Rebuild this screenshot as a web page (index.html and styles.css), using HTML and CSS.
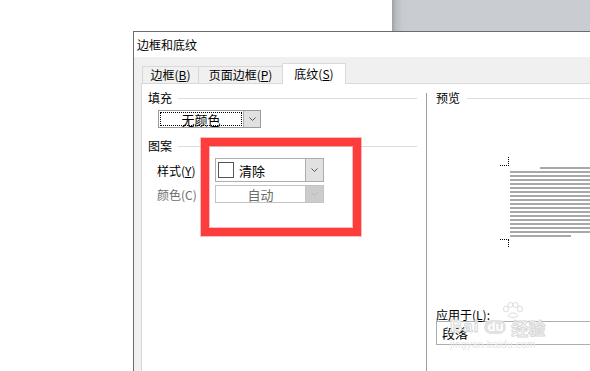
FILE: index.html
```html
<!DOCTYPE html>
<html lang="zh-CN">
<head>
<meta charset="UTF-8" />
<meta name="viewport" content="width=device-width, initial-scale=1" />
<title>边框和底纹</title>
<link rel="stylesheet" href="styles.css">
</head>
<body>

<div class="top">
  <div class="blank"></div>
  <div class="desk"></div>
</div>

<div class="dialog">
  <div class="titlebar">边框和底纹</div>
  <div class="body">
    <div class="tabs">
      <div class="tab t1">边框(<u>B</u>)</div>
      <div class="tab t2">页面边框(<u>P</u>)</div>
      <div class="tab t3 active">底纹(<u>S</u>)</div>
    </div>

    <div class="panel">
      <div class="left">
        <div class="legend"><span>填充</span><i></i></div>
        <div class="combo fill">
          <div class="val"><span class="focus">无颜色</span></div>
          <div class="arrow"><svg width="7" height="4" viewBox="0 0 7 4"><path d="M0.5 0.5L3.5 3.5L6.5 0.5" fill="none" stroke="#555" /></svg></div>
        </div>

        <div class="legend pattern"><span>图案</span><i></i></div>
        <div class="field style-row">
          <label>样式(<u>Y</u>)</label>
          <div class="combo style">
            <div class="val"><span class="swatch"></span><span class="name">清除</span></div>
            <div class="arrow"><svg width="7" height="4" viewBox="0 0 7 4"><path d="M0.5 0.5L3.5 3.5L6.5 0.5" fill="none" stroke="#555" /></svg></div>
          </div>
        </div>
        <div class="field color-row disabled">
          <label>颜色(C)</label>
          <div class="combo color">
            <div class="val center">自动</div>
            <div class="arrow"><svg width="7" height="4" viewBox="0 0 7 4"><path d="M0.5 0.5L3.5 3.5L6.5 0.5" fill="none" stroke="#b8b8b8" /></svg></div>
          </div>
        </div>
      </div>

      <div class="sep"></div>

      <div class="right">
        <div class="legend"><span>预览</span><i></i></div>
        <svg class="preview" width="90" height="93" viewBox="0 0 90 93">
          <path d="M0 9.5H9M8.5 1V9" fill="none" stroke="#000" stroke-dasharray="1 1" />
          <path d="M0 83.5H9M8.5 84V92" fill="none" stroke="#000" stroke-dasharray="1 1" />
          <g fill="#a8a8a8">
            <rect x="40" y="11" width="50" height="2" />
            <rect x="10" y="15" width="80" height="2" />
            <rect x="10" y="19" width="80" height="2" />
            <rect x="10" y="23" width="80" height="2" />
            <rect x="10" y="27" width="80" height="2" />
            <rect x="10" y="31" width="80" height="2" />
            <rect x="10" y="35" width="80" height="2" />
            <rect x="10" y="39" width="80" height="2" />
            <rect x="10" y="43" width="80" height="2" />
            <rect x="10" y="47" width="80" height="2" />
            <rect x="10" y="51" width="80" height="2" />
            <rect x="10" y="55" width="80" height="2" />
            <rect x="10" y="59" width="80" height="2" />
            <rect x="10" y="63" width="80" height="2" />
            <rect x="10" y="67" width="80" height="2" />
            <rect x="10" y="71" width="80" height="2" />
            <rect x="10" y="75" width="80" height="2" />
            <rect x="10" y="79" width="61" height="2" />
          </g>
        </svg>
        <div class="apply-label">应用于(<u>L</u>):</div>
        <div class="apply-box">段落</div>
      </div>
    </div>
  </div>
</div>

<div class="mark"></div>

<div class="watermark">
  <svg class="paw" width="22" height="16" viewBox="0 0 22 16">
    <g fill="none" stroke="#dcdcdc">
      <ellipse cx="4" cy="7" rx="2.5" ry="3" />
      <ellipse cx="8.5" cy="3" rx="2.5" ry="2.5" />
      <ellipse cx="13.5" cy="3" rx="2.5" ry="2.5" />
      <ellipse cx="18" cy="7" rx="2.5" ry="3" />
      <path d="M6 14c1-4 9-4 10 0c-2 2-8 2-10 0z" />
    </g>
  </svg>
  <div class="wm-logo"><span class="bai">Bai</span><span class="du">du</span><span class="jy">经验</span></div>
  <div class="wm-url">jingyan.baidu.com</div>
</div>

</body>
</html>
```

FILE: styles.css
```css
body {
  margin: 0;
  width: 590px;
  height: 371px;
  overflow: hidden;
  position: relative;
  background: #fff;
  font-family: "Noto Sans CJK SC", "Noto Sans", sans-serif;
  font-size: 12px;
  color: #000;
}
u {
  text-decoration: underline;
  text-underline-offset: 1px;
}

/* window behind the dialog */
.top {
  display: flex;
  height: 31px;
}
.top .blank {
  width: 392px;
}
.top .desk {
  flex: 1;
  background: linear-gradient(to right, #9ea1a6 0, #b9bcc1 4px, #c6c9ce 10px, #c9ccd1 16px);
}

/* dialog */
.dialog {
  margin-left: 133px;
  height: 340px;
  box-sizing: border-box;
  border-top: 1px solid #6b6b6b;
  border-left: 1px solid #6b6b6b;
  background: #f0f0f0;
  display: flex;
  flex-direction: column;
}
.titlebar {
  height: 25px;
  line-height: 25px;
  padding-left: 3px;
  background: #fff;
  font-size: 12px;
}
.body {
  flex: 1;
  display: flex;
  flex-direction: column;
  padding: 6px 0 0 7px;
}

.tabs {
  display: flex;
  align-items: flex-end;
  height: 20px;
  margin-left: 1px;
}
.tab {
  box-sizing: border-box;
  height: 17px;
  line-height: 16px;
  text-align: center;
  font-size: 12px;
  background: #f0f0f0;
  border-top: 1px solid #d9d9d9;
}
.tab.t1 {
  width: 57px;
  border-left: 1px solid #d9d9d9;
  border-right: 1px solid #d9d9d9;
}
.tab.t2 {
  width: 83px;
}
.tab.t3 {
  width: 64px;
  border-left: 1px solid #d9d9d9;
  border-right: 1px solid #d9d9d9;
}
.tab.active {
  height: 21px;
  line-height: 20px;
  background: #fff;
  margin-bottom: -1px;
  position: relative;
  z-index: 1;
}

.panel {
  flex: 1;
  display: flex;
  background: #fff;
  border-top: 1px solid #d9d9d9;
  border-left: 1px solid #d9d9d9;
}

.legend {
  display: flex;
  align-items: center;
  height: 16px;
  line-height: 16px;
}
.legend i {
  flex: 1;
  height: 1px;
  background: #dcdcdc;
  margin-left: 6px;
}

.left {
  width: 284px;
  box-sizing: border-box;
  padding: 6px 9px 0 6px;
}
.legend.pattern {
  margin-top: 10px;
}

.combo {
  display: flex;
  box-sizing: border-box;
  border: 1px solid #adadad;
  background: #fff;
}
.combo .val {
  flex: 1;
  display: flex;
  align-items: center;
}
.combo .arrow {
  width: 16px;
  display: flex;
  align-items: center;
  justify-content: center;
  background: #e1e1e1;
  border-left: 1px solid #adadad;
}

.combo.fill {
  margin: 4px 0 0 10px;
  width: 103px;
  height: 18px;
  border-color: #9a9a9a;
}
.combo.fill .val {
  padding: 1px;
}
.combo.fill .focus {
  flex: 1;
  height: 100%;
  box-sizing: border-box;
  border: 1px dotted #000;
  text-align: center;
  line-height: 13px;
  font-size: 13px;
}

.field {
  display: flex;
  align-items: center;
  margin-left: 9px;
}
.field label {
  width: 58px;
}
.style-row {
  margin-top: 4px;
  height: 24px;
}
.color-row {
  margin-top: 3px;
  height: 18px;
}
.combo.style {
  width: 109px;
  height: 24px;
}
.combo.style .swatch {
  width: 16px;
  height: 16px;
  box-sizing: border-box;
  border: 1px solid #555;
  margin-left: 2px;
}
.combo.style .name {
  margin-left: 5px;
  font-size: 13px;
}
.combo.style .arrow {
  width: 17px;
}
.combo.color {
  width: 109px;
  height: 18px;
  border-color: #c4c4c4;
}
.combo.color .arrow {
  width: 17px;
  background: #cccccc;
  border-left-color: #c4c4c4;
}
.combo .val.center {
  justify-content: center;
  font-size: 13px;
}
.disabled {
  color: #6d6d6d;
}

.sep {
  width: 1px;
  margin-top: 9px;
  background: #a0a0a0;
}

.right {
  flex: 1;
  padding: 6px 0 0 9px;
}
.right .legend i {
  margin-left: 7px;
}
.preview {
  display: block;
  margin: 50px 0 0 64px;
}
.apply-label {
  margin-top: 59px;
  height: 13px;
  line-height: 13px;
}
.apply-box {
  height: 24px;
  box-sizing: border-box;
  border: 1px solid #adadad;
  border-right: none;
  line-height: 22px;
  padding-left: 5px;
  font-size: 13px;
}

/* red annotation box drawn over the dialog */
.mark {
  position: absolute;
  left: 201px;
  top: 138px;
  width: 160px;
  height: 98px;
  box-sizing: border-box;
  border: 8px solid #fd3c3c;
  box-shadow: 0 0 0 1px rgba(253, 60, 60, 0.35), inset 0 0 0 1px rgba(253, 60, 60, 0.35);
}

/* baidu watermark */
.watermark {
  position: absolute;
  left: 450px;
  top: 302px;
  width: 112px;
  pointer-events: none;
}
.watermark .paw {
  display: block;
  margin-left: 52px;
}
.wm-logo {
  display: flex;
  align-items: center;
  height: 16px;
  margin-top: 1px;
  font-family: "Liberation Sans", sans-serif;
}
.wm-logo .bai {
  font-size: 17px;
  font-weight: bold;
  color: #fff;
  -webkit-text-stroke: 1px #d8d8d8;
  letter-spacing: 1px;
}
.wm-logo .du {
  margin-left: 5px;
  padding: 0 3px;
  height: 14px;
  line-height: 13px;
  border-radius: 7px;
  background: #e2e2e2;
  color: #fff;
  font-size: 13px;
  font-weight: bold;
}
.wm-logo .jy {
  margin-left: 5px;
  font-family: "Noto Sans CJK SC", sans-serif;
  font-size: 17px;
  font-weight: bold;
  color: #fff;
  -webkit-text-stroke: 1px #d8d8d8;
}
.wm-url {
  margin-top: 4px;
  font-family: "Liberation Sans", sans-serif;
  font-size: 10px;
  color: #e6e6e6;
  letter-spacing: 0.3px;
}
```
